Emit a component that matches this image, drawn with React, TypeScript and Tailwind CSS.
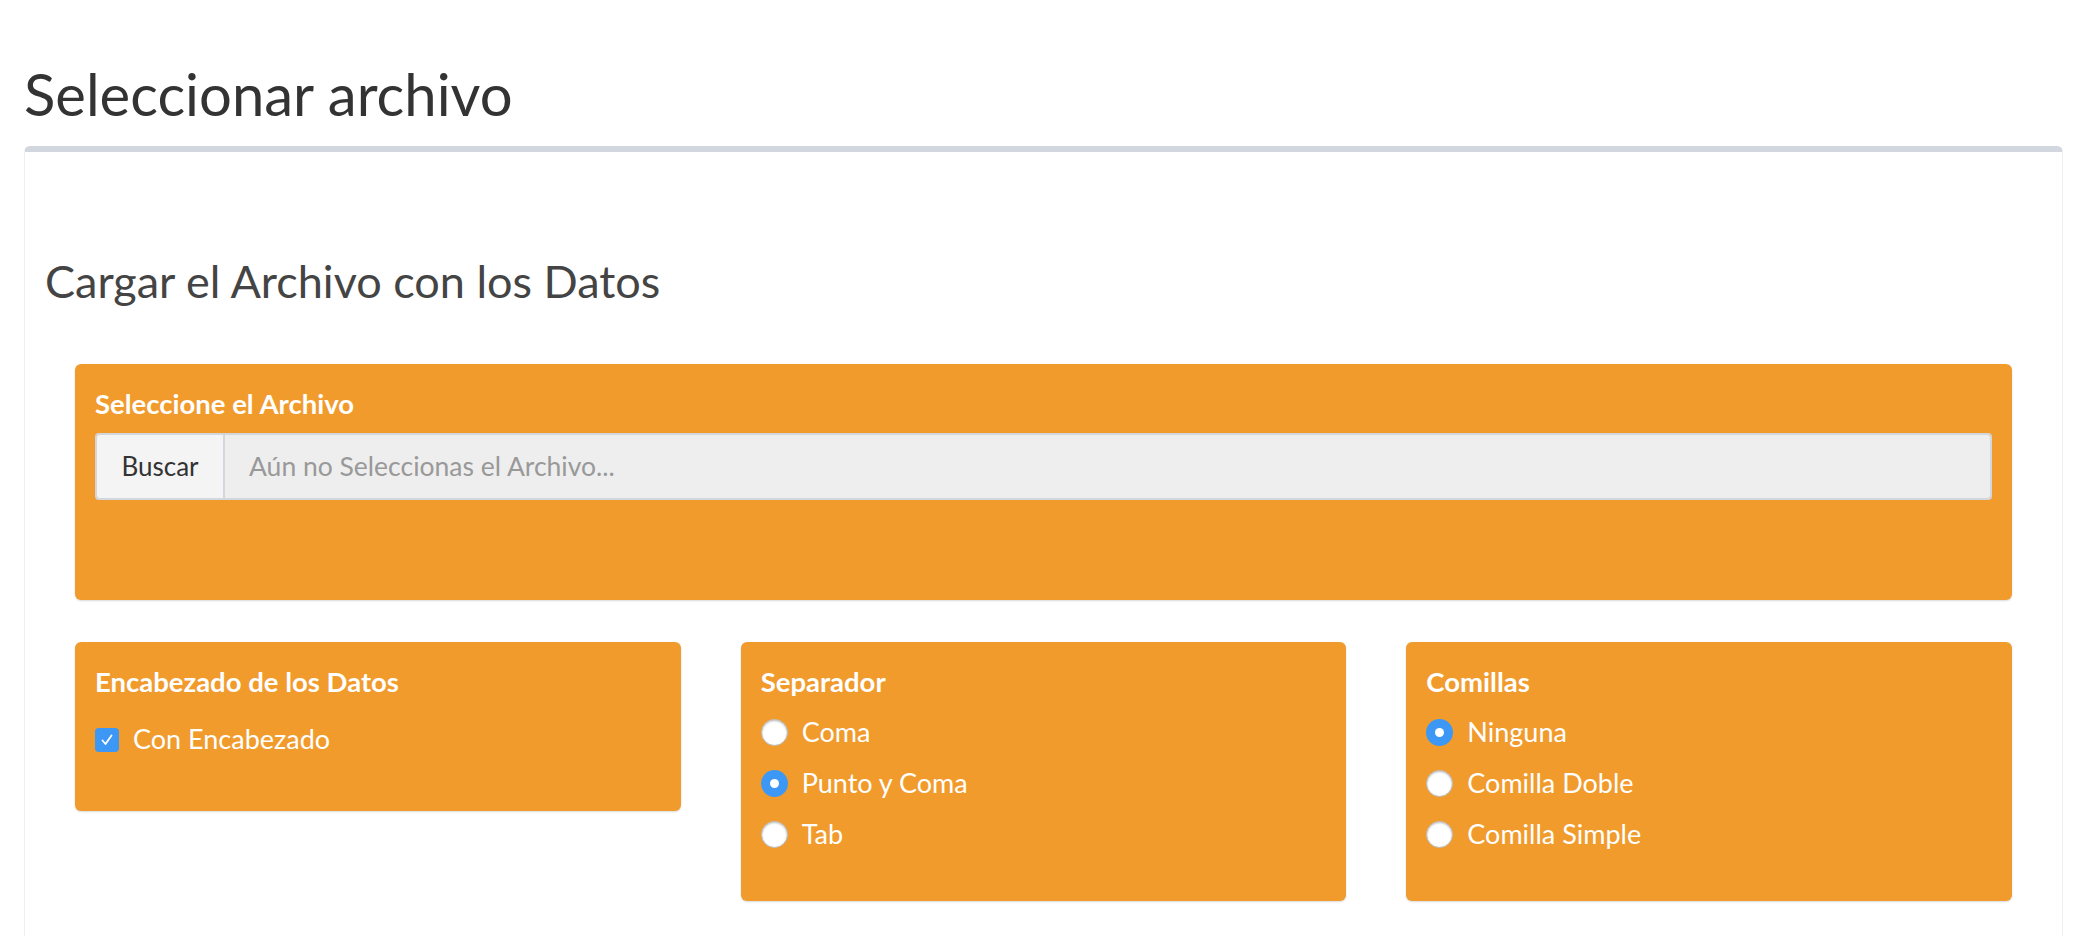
import React from 'react'

const font = { fontFamily: '"Lato", "Noto Sans", sans-serif' }

function Radio({ checked, label }: { checked?: boolean; label: string }) {
  return (
    <label className="flex items-center gap-[14px] h-[51px] text-white text-[27px]">
      {checked ? (
        <span className="w-[27px] h-[27px] rounded-full bg-[#3d98f5] flex items-center justify-center">
          <span className="w-[9px] h-[9px] rounded-full bg-white" />
        </span>
      ) : (
        <span className="w-[27px] h-[27px] rounded-full bg-white border border-[#b9b9b9] shadow-[inset_0_1px_2px_rgba(0,0,0,0.25)]" />
      )}
      <span>{label}</span>
    </label>
  )
}

function OptionBox({ title, children, tall }: { title: string; children: React.ReactNode; tall?: boolean }) {
  return (
    <div className={"bg-[#f19b2d] rounded-[6px] shadow-[0_1px_2px_rgba(0,0,0,0.15)] px-[20px] pt-[22px] " + (tall ? "h-[259px]" : "h-[169px]")}>
      <h4 className="text-white font-bold text-[27.5px] leading-[36px] mb-[7px]">{title}</h4>
      {children}
    </div>
  )
}

function App() {
  return (
    <div className="min-h-screen bg-white pl-[24px] pr-[17px]" style={font}>
      <h1 className="text-[#333] text-[58px] leading-[62px] pt-[63px] pb-[21px]">Seleccionar archivo</h1>

      <div className="border-t-[6px] border-[#d2d6de] rounded-t-[6px] border-x border-x-[#f0f0f0] bg-white min-h-[800px] px-[20px]">
        <h3 className="text-[#444] text-[45px] leading-[50px] pt-[104px] pb-[58px]">Cargar el Archivo con los Datos</h3>

        <div className="px-[30px]">
          <div className="bg-[#f19b2d] rounded-[6px] shadow-[0_1px_2px_rgba(0,0,0,0.15)] px-[20px] pt-[22px] h-[236px]">
            <h4 className="text-white font-bold text-[27.5px] leading-[36px] mb-[11px]">Seleccione el Archivo</h4>
            <div className="flex h-[67px] border-2 border-[#d2d6de] rounded-[4px] overflow-hidden">
              <button className="w-[128px] bg-[#f4f4f4] border-r-2 border-[#d2d6de] text-[#333] text-[26px]">Buscar</button>
              <div className="flex-1 bg-[#eeeeee] flex items-center pl-[24px] text-[#999] text-[26.5px]">Aún no Seleccionas el Archivo...</div>
            </div>
          </div>

          <div className="grid grid-cols-3 gap-[60px] mt-[42px] items-start">
            <OptionBox title="Encabezado de los Datos">
              <label className="flex items-center gap-[14px] h-[51px] text-white text-[27px] mt-[14px]">
                <span className="w-[24px] h-[24px] rounded-[4px] bg-[#3d98f5] flex items-center justify-center">
                  <svg width="14" height="14" viewBox="0 0 14 14" fill="none" stroke="white" strokeWidth="1.8" strokeLinecap="round" strokeLinejoin="round">
                    <path d="M2.5 7.5 L5.5 11 L11.5 2.5" />
                  </svg>
                </span>
                <span>Con Encabezado</span>
              </label>
            </OptionBox>
            <OptionBox title="Separador" tall>
              <Radio label="Coma" />
              <Radio label="Punto y Coma" checked />
              <Radio label="Tab" />
            </OptionBox>
            <OptionBox title="Comillas" tall>
              <Radio label="Ninguna" checked />
              <Radio label="Comilla Doble" />
              <Radio label="Comilla Simple" />
            </OptionBox>
          </div>
        </div>
      </div>
    </div>
  )
}

export default App
